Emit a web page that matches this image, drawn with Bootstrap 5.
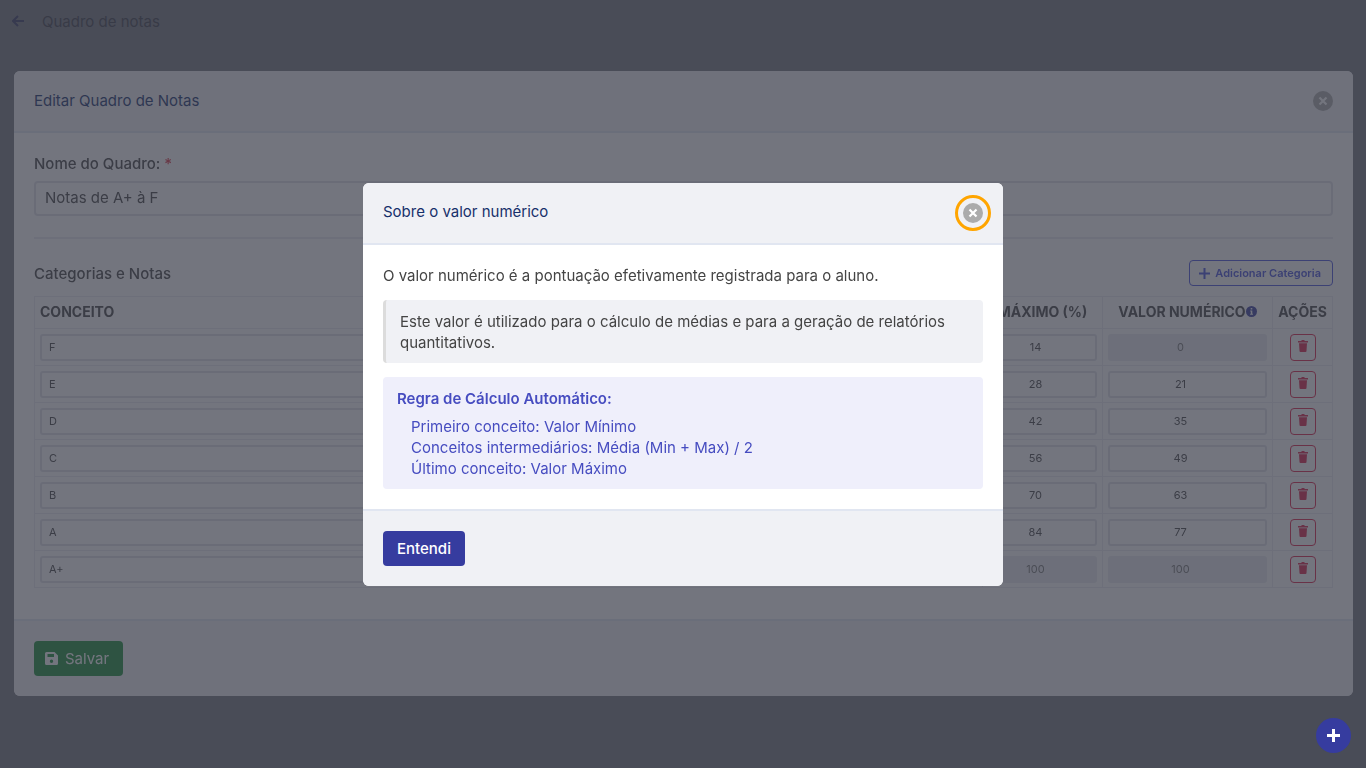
<!DOCTYPE html>
<html lang="pt-BR">
<head>
<meta charset="utf-8">
<meta name="viewport" content="width=device-width, initial-scale=1">
<title>Quadro de notas</title>
<link href="https://cdn.jsdelivr.net/npm/bootstrap@5.3.0/dist/css/bootstrap.min.css" rel="stylesheet">
<style>
  :root { --ink: #444; --navy: #17306b; --brand: #363c9f; --line: #e1e6f1; --soft: #f0f1f5; }
  body { font-family: Inter, "Open Sans", sans-serif; font-size: 15px; line-height: 21px; color: var(--ink); background: #fff; }
  svg { display: block; fill: currentColor; }
  .topbar { height: 53px; padding: 0 12px 11px; gap: 18px; box-shadow: 0 1px 4px rgba(0,0,0,.12); }
  .topbar a { color: var(--brand); }
  .modal { background: rgba(55,59,71,.7); overflow: hidden auto; }
  .modal-content { border: 0; border-radius: 6px; color: var(--ink); overflow: hidden; }
  .editor { max-width: none; margin: 71px 13px 70px 14px; }
  .info { max-width: 640px; }
  .modal-header { height: 62px; padding: 0 20px; background: var(--soft); border-bottom: 2px solid var(--line); border-radius: 0; }
  .modal-title { font-size: 15px; line-height: 21px; font-weight: 400; color: var(--navy); padding-bottom: 2px; }
  .info .modal-header { padding-right: 12px; }
  .modal-body { padding: 20px; }
  .modal-footer { padding: 20px; background: var(--soft); border-top: 2px solid var(--line); border-radius: 0; justify-content: flex-start; }
  .modal-footer > * { margin: 0; }
  .round-x { width: 20px; height: 20px; padding: 0; border: 0; border-radius: 50%; background: #ababab; color: #fff; display: grid; place-items: center; }
  .ring { padding: 5px; border: 3px solid #ffa500; border-radius: 50%; }
  .btn { font-size: 15px; line-height: 21px; padding: 7px 14px; border: 0; border-radius: 4px; font-weight: 500; }
  .btn-brand, .btn-brand:hover { background: var(--brand); color: #fff; }
  .btn-save, .btn-save:hover { background: #1a8c38; color: #fff; padding-inline: 11px 14px; gap: 7px; font-weight: 400; }
  .btn-add { height: 26px; padding: 0 11px 0 9px; border: 1px solid #4650dc; color: #4650dc; font-size: 11px; font-weight: 600; gap: 5px; }
  .btn-del { width: 26px; height: 27px; padding: 0 0 2px; border: 1px solid #dc2048; color: #dc2048; place-items: center; }
  .form-label { font-weight: 500; margin-bottom: 7px; }
  .heading { font-weight: 500; }
  .form-control { height: 35px; padding: 0 9px 2px; border: 2px solid #dfe1e8; border-radius: 4px; color: var(--ink); font-size: 15px; }
  .form-control-sm { height: 27px; min-height: 27px; padding: 0 7px; border-radius: 3px; font-size: 11px; }
  .num { text-align: center; padding-right: 21px; }
  .form-control:disabled { background: #ebecf1; border-color: #ebecf1; color: #777; }
  .rule { height: 2px; background: #eaecf1; margin: 21px 0; }
  .grades { table-layout: fixed; margin: 10px 0 11px; color: var(--ink); border-color: #e9ebf0; }
  .grades th { height: 32px; padding: 0 5px 2px; font-size: 14px; font-weight: 700; white-space: nowrap; vertical-align: middle; }
  .grades td { height: 37px; padding: 0 5px; vertical-align: middle; }
  .c-num { width: 120px; } .c-val { width: 170px; } .c-act { width: 60px; }
  .note { padding: 11px 14px 10px; border-radius: 4px; margin-top: 14px; }
  .note-plain { background: var(--soft); border-left: 3px solid #dcdcdc; }
  .note-rule { background: #efeffb; color: #464cc0; }
  .note-rule ul { margin: 7px 0 0; padding: 0 0 0 14px; list-style: none; }
  .note-rule strong { font-weight: 600; display: block; }
  .info-dot { color: var(--brand); }
  .fab { z-index: 1100; right: 15px; bottom: 15px; width: 35px; height: 35px; padding: 0; border-radius: 50%; display: grid; place-items: center; }
</style>
</head>
<body>
<header class="topbar d-flex align-items-center">
  <a href="#" aria-label="Voltar"><svg width="12" height="12" viewBox="0 0 12 12"><path d="M6 1 1 6l5 5M1.500 6H12" fill="none" stroke="currentColor" stroke-width="2"/></svg></a>
  <span>Quadro de notas</span>
</header>

<div class="modal show d-block" role="dialog" aria-labelledby="editTitle">
  <div class="modal-dialog editor">
    <form class="modal-content">
      <div class="modal-header">
        <h1 class="modal-title" id="editTitle">Editar Quadro de Notas</h1>
        <button type="button" class="round-x" aria-label="Fechar"><svg width="10" height="10" viewBox="0 0 10 10"><path d="m1.500 1.500 7 7M8.500 1.500l-7 7" stroke="currentColor" stroke-width="2.200"/></svg></button>
      </div>
      <div class="modal-body">
        <label class="form-label d-block" for="nome">Nome do Quadro: <span class="text-danger">*</span></label>
        <input class="form-control" id="nome" value="Notas de A+ à F">
        <div class="rule"></div>
        <div class="d-flex justify-content-between align-items-center">
          <span class="heading">Categorias e Notas</span>
          <button type="button" class="btn btn-add d-flex align-items-center"><svg width="11" height="11" viewBox="0 0 11 11"><path d="M5.500 0v11M0 5.500h11" stroke="currentColor" stroke-width="2"/></svg>Adicionar Categoria</button>
        </div>
        <table class="table table-bordered grades">
          <thead><tr>
            <th scope="col">CONCEITO</th>
            <th scope="col" class="c-num text-center">MÁXIMO (%)</th>
            <th scope="col" class="c-val"><span class="d-flex align-items-center justify-content-center">VALOR NUMÉRICO<svg class="info-dot" width="11" height="11" viewBox="0 0 11 11"><circle cx="5.500" cy="5.500" r="5.500"/><path d="M4.700 2h1.600v1.600H4.700zM4.200 4.500h2.100v3.300h.7v1H4.100v-1h.7V5.500h-.6z" fill="#fff"/></svg></span></th>
            <th scope="col" class="c-act text-center">AÇÕES</th>
          </tr></thead>
          <tbody id="rows"></tbody>
        </table>
      </div>
      <div class="modal-footer">
        <button type="submit" class="btn btn-save d-flex align-items-center"><svg width="13" height="13" viewBox="0 0 13 13"><path fill-rule="evenodd" d="M1.500 0h8L13 3.500v8a1.500 1.500 0 0 1-1.500 1.500h-10A1.500 1.500 0 0 1 0 11.500v-10A1.500 1.500 0 0 1 1.500 0zM2.500 2v3h6.500V2zM6.500 7.500a1.700 1.700 0 1 0 0 3.400 1.700 1.700 0 0 0 0-3.400z"/></svg>Salvar</button>
      </div>
    </form>
  </div>
</div>

<div class="modal show d-block" role="dialog" aria-modal="true" aria-labelledby="infoTitle">
  <div class="modal-dialog modal-dialog-centered info mx-auto">
    <div class="modal-content">
      <div class="modal-header">
        <h2 class="modal-title" id="infoTitle">Sobre o valor numérico</h2>
        <div class="ring"><button type="button" class="round-x" aria-label="Fechar"><svg width="10" height="10" viewBox="0 0 10 10"><path d="m1.500 1.500 7 7M8.500 1.500l-7 7" stroke="currentColor" stroke-width="2.200"/></svg></button></div>
      </div>
      <div class="modal-body">
        <p class="mb-0">O valor numérico é a pontuação efetivamente registrada para o aluno.</p>
        <div class="note note-plain">Este valor é utilizado para o cálculo de médias e para a geração de relatórios quantitativos.</div>
        <div class="note note-rule">
          <strong>Regra de Cálculo Automático:</strong>
          <ul>
            <li>Primeiro conceito: Valor Mínimo</li>
            <li>Conceitos intermediários: Média (Min + Max) / 2</li>
            <li>Último conceito: Valor Máximo</li>
          </ul>
        </div>
      </div>
      <div class="modal-footer"><button type="button" class="btn btn-brand">Entendi</button></div>
    </div>
  </div>
</div>

<button type="button" class="btn btn-brand fab position-fixed" aria-label="Adicionar"><svg width="13" height="13" viewBox="0 0 13 13"><path d="M6.500 0v13M0 6.500h13" stroke="currentColor" stroke-width="3"/></svg></button>

<script src="https://cdn.jsdelivr.net/npm/bootstrap@5.3.0/dist/js/bootstrap.bundle.min.js"></script>
<script>
  const grades = [['F',14,0],['E',28,21],['D',42,35],['C',56,49],['B',70,63],['A',84,77],['A+',100,100]];
  const last = grades.length - 1;
  const cell = (label, value, off) => `<td><input class="form-control form-control-sm num" aria-label="${label}" value="${value}"${off ? ' disabled' : ''}></td>`;
  document.getElementById('rows').innerHTML = grades.map(([name, max, val], i) => `<tr>
    <td><input class="form-control form-control-sm" aria-label="Conceito" value="${name}"></td>
    ${cell('Máximo', max, i === last)}${cell('Valor numérico', val, i === 0 || i === last)}
    <td><button type="button" class="btn btn-del d-grid mx-auto" aria-label="Excluir"><svg width="10" height="12" viewBox="0 0 10 12"><path d="M3.500 0h3v1H10v1.500H0V1h3.500zM1 3.300h8L8.500 11a1 1 0 0 1-1 1h-5a1 1 0 0 1-1-1z"/></svg></button></td>
  </tr>`).join('');
</script>
</body>
</html>
